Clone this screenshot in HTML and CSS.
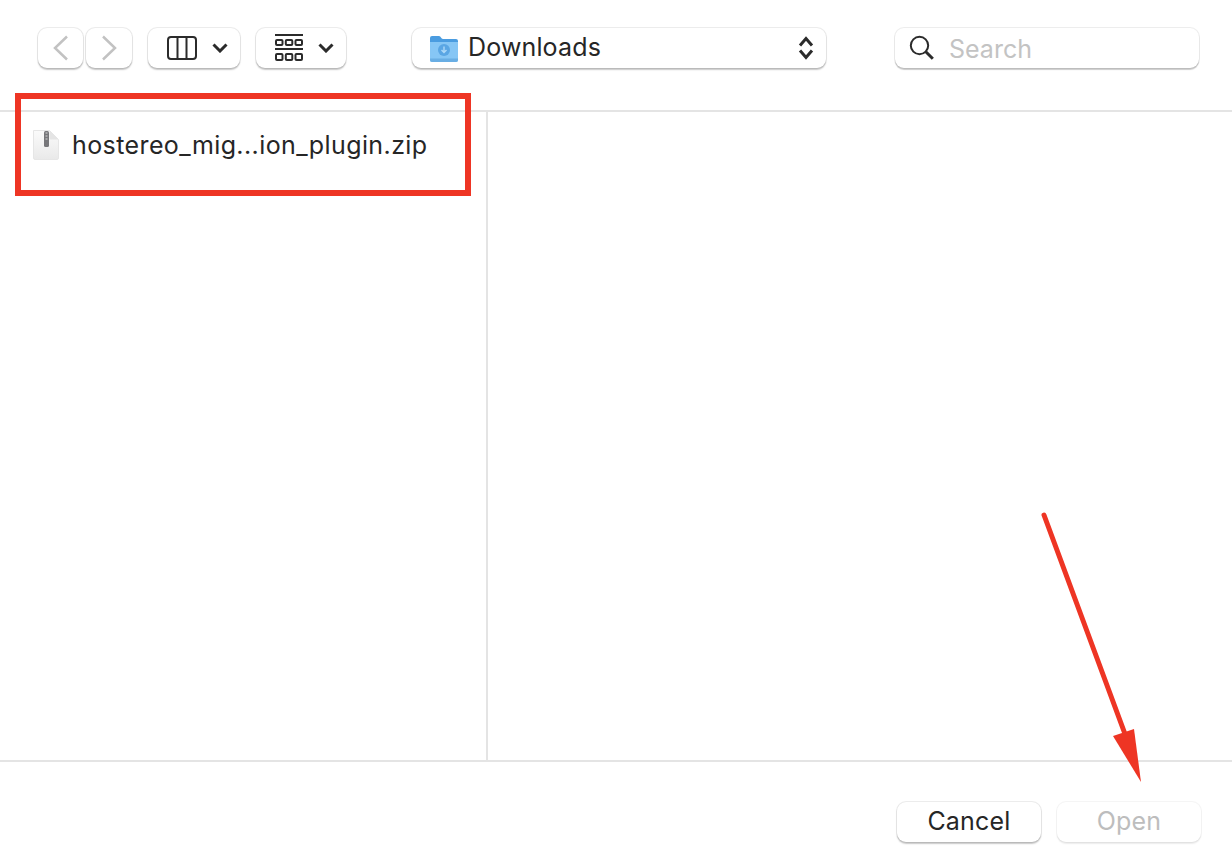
FILE: index.html
```html
<!DOCTYPE html>
<html lang="en">
<head>
<meta charset="utf-8">
<title>Open file</title>
<link rel="stylesheet" href="styles.css">
</head>
<body>
<div class="dialog">
  <header class="toolbar">
    <div class="nav-group">
      <button class="btn nav"><svg width="20" height="26" viewBox="0 0 20 26"><path d="M16 1.500 4 13l12 11.500" class="stroke-dim"/></svg></button>
      <button class="btn nav"><svg width="20" height="26" viewBox="0 0 20 26"><path d="M4 1.500 16 13 4 24.500" class="stroke-dim"/></svg></button>
    </div>
    <button class="btn view-btn">
      <svg width="30" height="24" viewBox="0 0 30 24"><rect x="1" y="1" width="28" height="22" rx="3" class="stroke-thin"/><path d="M10.500 1v22M19.500 1v22" class="stroke-thin"/></svg>
      <svg class="chev" width="16" height="10" viewBox="0 0 16 10"><path d="M1.500 1.500 8 8l6.500-6.500" class="stroke-bold"/></svg>
    </button>
    <button class="btn group-btn">
      <svg width="28" height="28" viewBox="0 0 28 28"><path d="M0 1h28M0 15h28" class="stroke-mid"/><rect x="1" y="6" width="6.500" height="5" rx="1" class="stroke-mid"/><rect x="10.800" y="6" width="6.500" height="5" rx="1" class="stroke-mid"/><rect x="20.500" y="6" width="6.500" height="5" rx="1" class="stroke-mid"/><rect x="1" y="20" width="6.500" height="6" rx="1" class="stroke-mid"/><rect x="10.800" y="20" width="6.500" height="6" rx="1" class="stroke-mid"/><rect x="20.500" y="20" width="6.500" height="6" rx="1" class="stroke-mid"/></svg>
      <svg class="chev" width="16" height="10" viewBox="0 0 16 10"><path d="M1.500 1.500 8 8l6.500-6.500" class="stroke-bold"/></svg>
    </button>
    <button class="btn location">
      <svg class="folder" width="28" height="27" viewBox="0 0 28 27"><path d="M0 3a2 2 0 0 1 2-2h7c2 0 2 3 4 3h13a2 2 0 0 1 2 2v4H0z" fill="#4a9ce0"/><path d="M0 7h28v18a2 2 0 0 1-2 2H2a2 2 0 0 1-2-2z" fill="#86c6f5"/><path d="M0 23.500h28V25a2 2 0 0 1-2 2H2a2 2 0 0 1-2-2z" fill="#69aee4"/><circle cx="14" cy="15" r="6" fill="#5aa6e4"/><path d="M14 11.500v6m-2.500-2.500 2.500 2.500 2.500-2.500" fill="none" stroke="#aed9f8" stroke-width="1.400"/></svg>
      <span class="location-name">Downloads</span>
      <svg class="updown" width="16" height="24" viewBox="0 0 16 24"><path d="M2 9.500 8 2.500l6 7M2 14.500l6 7 6-7" class="stroke-bold"/></svg>
    </button>
    <div class="search">
      <svg width="26" height="26" viewBox="0 0 26 26"><circle cx="10.500" cy="10.500" r="8.700" class="stroke-mid"/><path d="m16.800 16.800 7 7" class="stroke-bold"/></svg>
      <span class="search-text">Search</span>
    </div>
  </header>
  <main class="browser">
    <section class="column first">
      <div class="file">
        <svg class="zip" width="26" height="30" viewBox="0 0 26 30"><defs><linearGradient id="zipfill" x1="0" y1="0" x2="0" y2="1"><stop offset="0" stop-color="#fbfbfb"/><stop offset="1" stop-color="#e9e9e9"/></linearGradient></defs><path d="M.5.500h16l9 9V28a1.500 1.500 0 0 1-1.500 1.500H2A1.500 1.500 0 0 1 .5 28z" fill="url(#zipfill)" stroke="#e6e6e6"/><path d="M16.500.500v8a1 1 0 0 0 1 1h8z" fill="#e4e4e4"/><rect x="11" y="1" width="5" height="16" rx="1.500" fill="#77777a"/><path d="M12.500 3h2M12.500 6h2M12.500 9h2" stroke="#d8d8d8"/></svg>
        <span class="file-name">hostereo_mig...ion_plugin.zip</span>
      </div>
    </section>
    <section class="column second"></section>
  </main>
  <footer class="footer">
    <button class="btn action">Cancel</button>
    <button class="btn action disabled">Open</button>
  </footer>
</div>
<div class="callout-box"></div>
<svg class="callout-arrow" width="120" height="290" viewBox="0 0 120 290"><path d="M3 3 84 222" stroke="#ee3524" stroke-width="5" stroke-linecap="round"/><path d="M100 270 72 224 93 217z" fill="#ee3524"/></svg>
</body>
</html>
```
FILE: styles.css
```css
* { box-sizing: border-box; }
html, body { margin: 0; height: 100%; background: #fff; }
body { font-family: Inter, "Liberation Sans", sans-serif; color: #262626; overflow: hidden; }
.dialog { width: 1232px; height: 864px; display: flex; flex-direction: column; }
.toolbar { height: 112px; flex: none; display: flex; align-items: flex-start; padding: 28px 32px 0 38px; border-bottom: 2px solid #e4e4e4; }
.btn { display: flex; align-items: center; height: 40px; margin: 0; padding: 0; background: #fff; border: 0; border-radius: 9px; box-shadow: 0 0 0 1px rgba(0,0,0,.07), 0 1.500px 1.500px rgba(0,0,0,.22); font-family: inherit; color: inherit; }
.nav-group { display: flex; gap: 3px; margin-right: 16px; }
.nav { width: 45px; justify-content: center; }
.nav + .nav { width: 46px; }
.view-btn { width: 92px; padding: 0 12px 0 19px; justify-content: space-between; margin-right: 16px; }
.group-btn { width: 90px; padding: 0 12px 0 19px; justify-content: space-between; margin-right: 66px; }
.location { width: 414px; padding: 0 12px 0 18px; margin-right: 69px; }
.location-name { font-size: 25px; letter-spacing: 0.150px; margin: -2px 0 0 10px; flex: 1; text-align: left; }
.search { width: 304px; height: 40px; display: flex; align-items: center; gap: 14px; padding-left: 14px; border-radius: 9px; box-shadow: 0 0 0 1px rgba(0,0,0,.07), 0 1.500px 1px rgba(0,0,0,.2); }
.search-text { font-size: 25px; color: #c3c3c3; letter-spacing: 0; margin-top: 2px; }
.stroke-dim { fill: none; stroke: #c2c2c2; stroke-width: 2.500; }
.stroke-thin { fill: none; stroke: #2b2b2b; stroke-width: 2; }
.stroke-mid { fill: none; stroke: #2b2b2b; stroke-width: 2; }
.stroke-bold { fill: none; stroke: #2b2b2b; stroke-width: 3; }
.browser { flex: 1; display: flex; min-height: 0; }
.column { height: 100%; }
.first { width: 488px; border-right: 2px solid #e4e4e4; padding: 18px 0 0 33px; }
.second { flex: 1; }
.file { display: flex; align-items: center; gap: 13px; }
.zip { flex: none; }
.file-name { font-size: 25px; letter-spacing: 0.400px; white-space: nowrap; }
.footer { height: 104px; flex: none; border-top: 2px solid #e4e4e4; display: flex; justify-content: flex-end; gap: 16px; padding: 40px 31px 0 0; }
.action { width: 144px; justify-content: center; font-size: 25px; letter-spacing: 0.200px; padding-bottom: 2px; }
.disabled { color: #bdbdbd; box-shadow: 0 0 0 1px rgba(0,0,0,.04), 0 1.500px 1.500px rgba(0,0,0,.08); }
.callout-box { position: absolute; left: 15px; top: 93px; width: 456px; height: 103px; border: 6px solid #ee3524; }
.callout-arrow { position: absolute; left: 1041px; top: 512px; }
```
